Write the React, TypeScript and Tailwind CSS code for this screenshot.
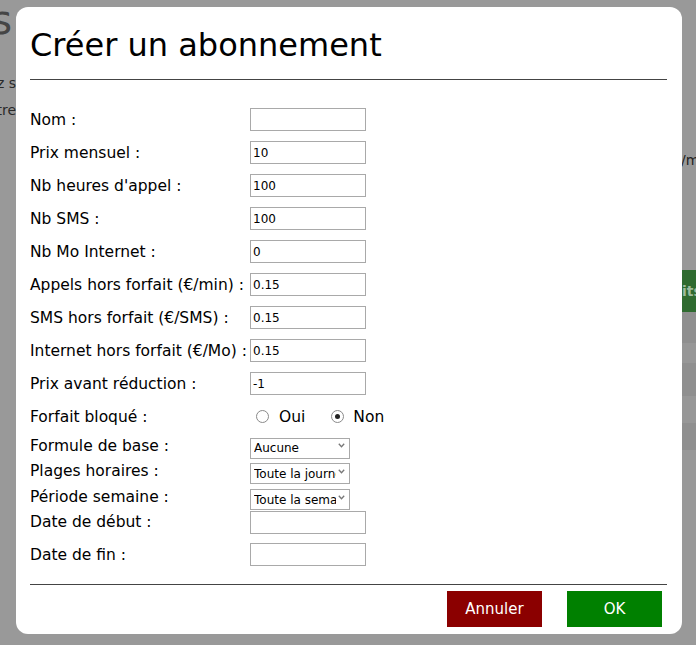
import React from 'react';

const font = "font-['DejaVu_Sans',Verdana,sans-serif]";

function Field({ value = '' }: { value?: string }) {
  return (
    <input
      type="text"
      defaultValue={value}
      className="w-[116px] h-[23px] border border-[#a9a9a9] bg-white px-[2px] text-[12px] text-black outline-none"
    />
  );
}

function Select({ value }: { value: string }) {
  return (
    <div className="relative w-[100px] h-[21px]">
      <select
        defaultValue={value}
        className="appearance-none w-full h-full border border-[#a9a9a9] bg-white pl-[3px] pr-[13px] text-[12px] text-black outline-none"
      >
        <option>{value}</option>
      </select>
      {/* chevron */}
      <svg className="absolute right-[5px] top-[8px] pointer-events-none" width="7" height="5" viewBox="0 0 7 5">
        <polyline points="0.8,0.8 3.5,3.8 6.2,0.8" fill="none" stroke="#777" strokeWidth="1.3" />
      </svg>
    </div>
  );
}

function Radio({ checked }: { checked?: boolean }) {
  return (
    <span className="w-[13px] h-[13px] rounded-full border border-[#8a8a8a] bg-white flex items-center justify-center">
      {checked && <span className="w-[5px] h-[5px] rounded-full bg-[#222]" />}
    </span>
  );
}

function Row({ label, h, children, className = '' }: { label: string; h: string; children: React.ReactNode; className?: string }) {
  return (
    <div className={`flex items-center ${h} ${className}`}>
      <div className="w-[220px] text-[15.5px] leading-[18px] text-black whitespace-nowrap">{label}</div>
      {children}
    </div>
  );
}

export default function App() {
  const fields: [string, string][] = [
    ['Nom :', ''],
    ['Prix mensuel :', '10'],
    ["Nb heures d'appel :", '100'],
    ['Nb SMS :', '100'],
    ['Nb Mo Internet :', '0'],
    ['Appels hors forfait (€/min) :', '0.15'],
    ['SMS hors forfait (€/SMS) :', '0.15'],
    ['Internet hors forfait (€/Mo) :', '0.15'],
    ['Prix avant réduction :', '-1'],
  ];

  return (
    <div className={`flex w-[696px] h-[645px] bg-[#999999] overflow-hidden ${font}`}>
      {/* page behind the overlay, left side */}
      <div className="w-[16px] shrink-0 overflow-hidden flex flex-col items-end">
        <div className="h-[45px] text-[40px] leading-[40px] text-[#454545] whitespace-nowrap pr-[4px]">Abonnements</div>
        <div className="mt-[28px] text-[14px] leading-[20px] text-[#2a2a2a] whitespace-nowrap">Choisissez s</div>
        <div className="mt-[7px] text-[14px] leading-[20px] text-[#2a2a2a] whitespace-nowrap">votre</div>
      </div>

      {/* Modal */}
      <div className="w-[666px] h-[627px] shrink-0 mt-[7px] bg-white rounded-[12px] pl-[14px] pr-[15px] pt-[20px] flex flex-col">
        <h1 className="text-[32px] leading-[36px] text-black">Créer un abonnement</h1>
        <div className="mt-[16px] border-t border-[#444]" />

        <div className="mt-[23px] flex flex-col">
          {fields.map(([label, value]) => (
            <Row key={label} label={label} h="h-[33px]">
              <Field value={value} />
            </Row>
          ))}

          <Row label="Forfait bloqué :" h="h-[33px]">
            <div className="flex items-center text-[15.5px] leading-[18px] text-black">
              <span className="ml-[6px]"><Radio /></span>
              <span className="ml-[10px]">Oui</span>
              <span className="ml-[26px]"><Radio checked /></span>
              <span className="ml-[9px]">Non</span>
            </div>
          </Row>

          <Row label="Formule de base :" h="h-[25px]">
            <Select value="Aucune" />
          </Row>
          <Row label="Plages horaires :" h="h-[26px]">
            <Select value="Toute la journée" />
          </Row>
          <Row label="Période semaine :" h="h-[26px]">
            <Select value="Toute la semaine" />
          </Row>
          <Row label="Date de début :" h="h-[24px]">
            <Field />
          </Row>
          <Row label="Date de fin :" h="h-[25px]" className="mt-[8px]">
            <Field />
          </Row>
        </div>

        <div className="mt-[17px] border-t border-[#444]" />

        <div className="mt-[6px] flex justify-end gap-[25px] pr-[5px]">
          <button className="w-[95px] h-[36px] bg-[#8b0000] text-white text-[15px]">Annuler</button>
          <button className="w-[95px] h-[36px] bg-[#008000] text-white text-[15px]">OK</button>
        </div>
      </div>

      {/* page behind the overlay, right side */}
      <div className="w-[14px] shrink-0 overflow-hidden flex flex-col">
        <div className="mt-[150px] text-[14px] leading-[20px] text-[#222] whitespace-nowrap -ml-[1px]">/mois</div>
        <div className="mt-[100px] h-[42px] bg-[#2f6b30] flex items-center text-[14px] font-bold text-[#9dbb9d] whitespace-nowrap">its</div>
        <div className="h-[31px] bg-[#8f8f8f]" />
        <div className="h-[20px] bg-[#979797]" />
        <div className="h-[33px] bg-[#8f8f8f]" />
        <div className="h-[27px] bg-[#979797]" />
        <div className="h-[27px] bg-[#8f8f8f]" />
      </div>
    </div>
  );
}
